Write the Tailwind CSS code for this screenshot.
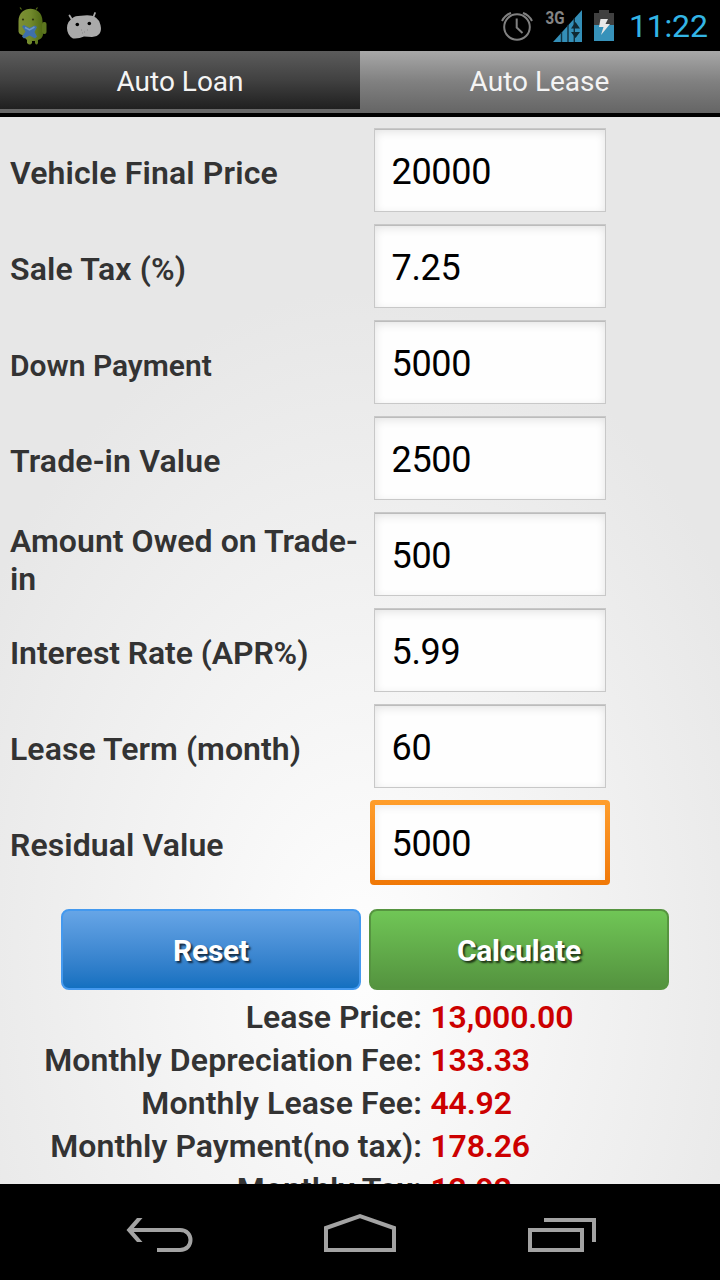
<!DOCTYPE html>
<html lang="en">
<head>
<meta charset="utf-8">
<title>Auto Lease</title>
<script src="https://cdn.jsdelivr.net/npm/@tailwindcss/browser@4"></script>
</head>
<body class="bg-black font-['Roboto',sans-serif]">
<div class="w-[720px] h-[1280px] flex flex-col overflow-hidden bg-black">
  <header class="h-[51px] shrink-0 flex items-center">
    <svg class="w-[120px] h-[50px]" viewBox="0 0 120 50">
      <defs><linearGradient id="a" x1="0" x2="1"><stop stop-color="#7d8f35"/><stop offset=".5" stop-color="#71892c"/><stop offset="1" stop-color="#4f6914"/></linearGradient></defs>
      <path d="M21.500 8.500l-1.500-2M36 8.500l1.500-2" stroke="#566e18" stroke-width="1.200"/>
      <path d="M18.500 20C18.500 3.500 42.500 3.500 42.500 20L43 34Q42 38 38 39V42Q36.500 45 35 42V40H32V42Q30 45 27 42V39L22 34Q18 33 18.500 29Z" fill="url(#a)"/>
      <rect x="42" y="21" width="4.500" height="12" rx="2" fill="#5c751e"/>
      <circle cx="23" cy="18.500" r="1.100" fill="#303713"/><circle cx="33" cy="18.500" r="1.100" fill="#303713"/>
      <path d="M24 24l5.500 3 5.500-2.500 2 1.500-2.500 5 2.500 4.500-2 2-5.500-3-5.500 3-2-2 3.500-5-3.500-5z" fill="#3f70ab"/>
      <path d="M25 26.500l4.500 2.500 5-3" fill="none" stroke="#6f98c4" stroke-width="1.500"/>
      <path d="M69.500 14.500l3 5M95 12l-2 5" stroke="#aaa" stroke-width="1.800" stroke-linecap="round"/>
      <path d="M67 27Q67 20 74 16Q77 14.500 84 14.500Q98 13 100.500 24Q103 35 92 36L84 35.500Q79 38 73 37.500Q67 34 67 27Z" fill="#aaa"/>
      <circle cx="77.300" cy="23.500" r="1.800"/><circle cx="89.300" cy="22.500" r="1.800"/>
      <path d="M81 29h1m2 2h1m2-2h1m-6 3h1" stroke="#888"/>
    </svg>
    <svg class="w-[130px] h-[50px] ml-auto" viewBox="490 0 130 50">
      <g fill="none" stroke="#808080" stroke-width="2">
        <circle cx="517" cy="26" r="12.800"/><path d="M516.700 17.500V26.500L522.500 32"/>
        <path d="M502 20Q505 14 511 12M523 12Q529 14 532 20"/>
      </g>
      <text x="545.500" y="23" textLength="19" lengthAdjust="spacingAndGlyphs" font-size="18" font-weight="700" fill="#858585">3G</text>
      <path d="M553 41L582 9V41Z" fill="#348fb8"/>
      <path d="M561.500 31V41M568 24V41M574.300 17V41" stroke="#10313f" stroke-width="1.400"/>
      <path d="M571 27.500L575.500 21L580 27.500ZM571 31L575.500 37L580 31Z" fill="#102832"/>
      <path d="M594 12H599V9H609V12H614V24H594Z" fill="#404040"/><path d="M594 24H614V40H594Z" fill="#3792ba"/>
      <path d="M600.500 18H608L605.500 23H610L601 34L603.500 26H599Z" fill="#e8e8e8"/>
    </svg>
    <div class="w-[100px] pl-[9px] text-[32px] leading-[50px] tracking-[-0.2px] text-[#33b5e5]">11:22</div>
  </header>
  <nav class="h-[62px] shrink-0 grid grid-cols-2 grid-rows-[62px] text-[28px] text-[#f4f4f4] text-center leading-[61px]">
    <div class="border-b-4 border-[#686868] bg-linear-to-b from-[#5c5c5c] via-[#414141] to-[#202020]">Auto Loan</div>
    <div class="pr-px bg-linear-to-b from-[#a8a8a8] via-[#808080] to-[#656565]">Auto Lease</div>
  </nav>
  <main class="mt-[4px] h-[1067px] shrink-0 overflow-hidden bg-[radial-gradient(ellipse_440px_670px_at_360px_843px,#fefefe,#e7e7e7)] text-[#333] font-semibold text-[32px]">
    <div class="pt-[11px] grid grid-cols-[374px_232px] auto-rows-[84px] gap-y-[12px] items-center leading-[38px]">
      <label class="pl-[10px] pt-[6px] tracking-[0.14px]">Vehicle Final Price</label>
      <div class="h-[84px] pl-[16.500px] text-[36px] leading-[86px] tracking-[-0.3px] font-normal text-black bg-[#fefefe] border border-[#c8c8c8] shadow-[inset_0_1px_0_#bcbcbc,inset_0_3px_10px_#0000001c]">20000</div>
      <label class="pl-[10px] pt-[6px] tracking-[0.17px]">Sale Tax (%)</label>
      <div class="h-[84px] pl-[16.500px] text-[36px] leading-[86px] tracking-[-0.3px] font-normal text-black bg-[#fefefe] border border-[#c8c8c8] shadow-[inset_0_1px_0_#bcbcbc,inset_0_3px_10px_#0000001c]">7.25</div>
      <label class="pl-[10px] pt-[7px] text-[30px]">Down Payment</label>
      <div class="h-[84px] pl-[16.500px] text-[36px] leading-[86px] tracking-[-0.3px] font-normal text-black bg-[#fefefe] border border-[#c8c8c8] shadow-[inset_0_1px_0_#bcbcbc,inset_0_3px_10px_#0000001c]">5000</div>
      <label class="pl-[10px] pt-[6px] tracking-[0.15px]">Trade-in Value</label>
      <div class="h-[84px] pl-[16.500px] text-[36px] leading-[86px] tracking-[-0.3px] font-normal text-black bg-[#fefefe] border border-[#c8c8c8] shadow-[inset_0_1px_0_#bcbcbc,inset_0_3px_10px_#0000001c]">2500</div>
      <label class="pl-[10px] pt-[12px] tracking-[0.04px]">Amount Owed on Trade-<br>in</label>
      <div class="h-[84px] pl-[16.500px] text-[36px] leading-[86px] tracking-[-0.3px] font-normal text-black bg-[#fefefe] border border-[#c8c8c8] shadow-[inset_0_1px_0_#bcbcbc,inset_0_3px_10px_#0000001c]">500</div>
      <label class="pl-[10px] pt-[6px] tracking-[-0.1px]">Interest Rate (APR%)</label>
      <div class="h-[84px] pl-[16.500px] text-[36px] leading-[86px] tracking-[-0.3px] font-normal text-black bg-[#fefefe] border border-[#c8c8c8] shadow-[inset_0_1px_0_#bcbcbc,inset_0_3px_10px_#0000001c]">5.99</div>
      <label class="pl-[10px] pt-[6px] tracking-[0.06px]">Lease Term (month)</label>
      <div class="h-[84px] pl-[16.500px] text-[36px] leading-[86px] tracking-[-0.3px] font-normal text-black bg-[#fefefe] border border-[#c8c8c8] shadow-[inset_0_1px_0_#bcbcbc,inset_0_3px_10px_#0000001c]">60</div>
      <label class="pl-[10px] pt-[6px] tracking-[0.1px]">Residual Value</label>
      <div class="-mx-[4px] h-[85px] p-[5px] rounded-[4px] bg-linear-to-b from-[#ff9e2b] to-[#f07806]">
        <div class="h-[75px] pl-[16.500px] text-[36px] leading-[78px] tracking-[-0.3px] font-normal text-black bg-[#fefefe] shadow-[inset_0_2px_8px_#00000014]">5000</div>
      </div>
    </div>
    <div class="mt-[25px] pl-[61px] flex gap-[8px] text-[30px] leading-[80px] tracking-[-0.25px] font-bold text-white text-center [text-shadow:2px_2px_2px_#000000b0]">
      <div class="w-[300px] h-[81px] rounded-[8px] border-2 border-[#4499ee] bg-linear-to-b from-[#66a5e6] to-[#1370c0]">Reset</div>
      <div class="w-[300px] h-[81px] rounded-[8px] border-2 border-[#569440] bg-linear-to-b from-[#70c656] to-[#54933f]">Calculate</div>
    </div>
    <div class="mt-[6px] grid grid-cols-[422px_1fr] gap-x-[8.500px] auto-rows-[43px] leading-[43px]">
      <div class="text-right">Lease Price:</div><div class="text-[#c00] tracking-[-0.2px]">13,000.00</div>
      <div class="text-right tracking-[0.12px]">Monthly Depreciation Fee:</div><div class="text-[#c00] tracking-[-0.2px]">133.33</div>
      <div class="text-right tracking-[0.12px]">Monthly Lease Fee:</div><div class="text-[#c00] tracking-[-0.2px]">44.92</div>
      <div class="text-right tracking-[0.04px]">Monthly Payment(no tax):</div><div class="text-[#c00] tracking-[-0.2px]">178.26</div>
      <div class="text-right tracking-[0.15px]">Monthly Tax:</div><div class="text-[#c00] tracking-[-0.2px]">12.92</div>
    </div>
  </main>
  <footer class="h-[96px] shrink-0 bg-black">
    <svg class="w-[720px] h-[96px]" viewBox="0 1184 720 96" fill="none" stroke="#a3a3a3" stroke-width="4">
      <path d="M131 1230H180C194 1230 194 1250 180 1250H157"/>
      <path d="M137 1218H142.500L132 1230L142.500 1242H137L126.500 1230Z" fill="#a3a3a3" stroke="none"/>
      <path d="M326 1228L360 1216L394 1228V1250H326Z"/>
      <path d="M530 1230H582V1250H530Z"/><path d="M544 1220H594V1242"/>
    </svg>
  </footer>
</div>
</body>
</html>
